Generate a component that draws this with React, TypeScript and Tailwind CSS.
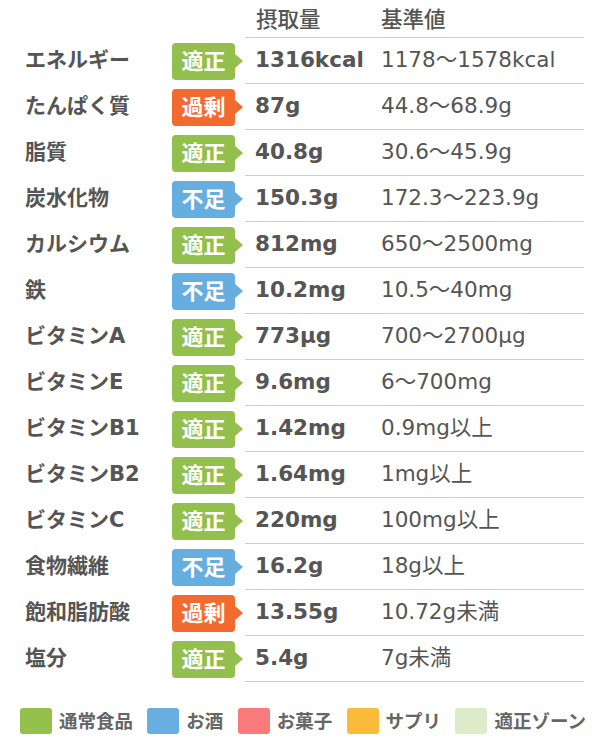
import React from "react";

type Status = "ok" | "over" | "under";

const rows: [string, Status, string, string][] = [
  ["エネルギー", "ok", "1316kcal", "1178〜1578kcal"],
  ["たんぱく質", "over", "87g", "44.8〜68.9g"],
  ["脂質", "ok", "40.8g", "30.6〜45.9g"],
  ["炭水化物", "under", "150.3g", "172.3〜223.9g"],
  ["カルシウム", "ok", "812mg", "650〜2500mg"],
  ["鉄", "under", "10.2mg", "10.5〜40mg"],
  ["ビタミンA", "ok", "773µg", "700〜2700µg"],
  ["ビタミンE", "ok", "9.6mg", "6〜700mg"],
  ["ビタミンB1", "ok", "1.42mg", "0.9mg以上"],
  ["ビタミンB2", "ok", "1.64mg", "1mg以上"],
  ["ビタミンC", "ok", "220mg", "100mg以上"],
  ["食物繊維", "under", "16.2g", "18g以上"],
  ["飽和脂肪酸", "over", "13.55g", "10.72g未満"],
  ["塩分", "ok", "5.4g", "7g未満"],
];

const badge: Record<Status, { text: string; bg: string; tri: string }> = {
  ok: { text: "適正", bg: "bg-[#93bf4c]", tri: "border-l-[#93bf4c]" },
  over: { text: "過剰", bg: "bg-[#f36a2f]", tri: "border-l-[#f36a2f]" },
  under: { text: "不足", bg: "bg-[#67aee0]", tri: "border-l-[#67aee0]" },
};

const legend: [string, string][] = [
  ["bg-[#95c04c]", "通常食品"],
  ["bg-[#68aee0]", "お酒"],
  ["bg-[#f87a7a]", "お菓子"],
  ["bg-[#fbbb3a]", "サプリ"],
  ["bg-[#dcebc9]", "適正ゾーン"],
];

const FONT = { fontFamily: '"DejaVu Sans", "Noto Sans CJK JP", sans-serif' };
const CJK = { fontFamily: '"Noto Sans CJK JP", sans-serif' };

export default function App() {
  return (
    <div className="w-[600px] h-[749px] bg-white text-[#555555]" style={FONT}>
      <div className="flex h-[38px]">
        <div className="w-[245px]" />
        <div className="flex flex-1 mr-[16px] items-center border-b border-[#cccccc] text-[21.5px] font-medium" style={CJK}>
          <div className="w-[136px] pl-[11px]">摂取量</div>
          <div>基準値</div>
        </div>
      </div>
      {rows.map(([label, st, val, ref]) => {
        const b = badge[st];
        return (
          <div key={label} className="flex h-[46px]">
            <div className="w-[172px] pl-[25px] flex items-center text-[21px] font-bold">{label}</div>
            <div className="w-[73px] flex items-center">
              <div
                className={`${b.bg} h-[37px] w-[63px] rounded-[4px] flex items-center justify-center pb-[5px] leading-none text-white text-[22px] font-bold`}
                style={CJK}
              >
                {b.text}
              </div>
              <div className={`w-0 h-0 border-y-[7px] border-y-transparent border-l-[8px] ${b.tri}`} />
            </div>
            <div className="flex flex-1 mr-[16px] items-center border-b border-[#cccccc] text-[21.5px]">
              <div className="w-[136px] pl-[10px] font-bold">{val}</div>
              <div>{ref}</div>
            </div>
          </div>
        );
      })}
      <div className="flex justify-between items-center pl-[20px] pr-[14px] mt-[25px]" style={CJK}>
        {legend.map(([c, t]) => (
          <div key={t} className="flex items-center gap-[7px]">
            <div className={`${c} w-[32px] h-[26px] rounded-[3px]`} />
            <div className="text-[18.5px] font-bold text-[#666666]">{t}</div>
          </div>
        ))}
      </div>
    </div>
  );
}
